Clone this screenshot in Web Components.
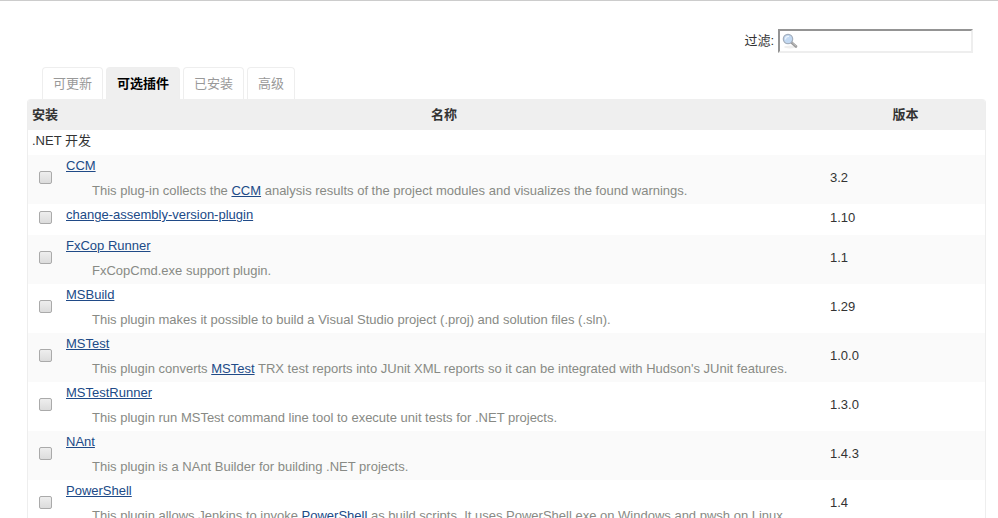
<!DOCTYPE html>
<html lang="zh-CN">
<head>
<meta charset="utf-8">
<title>插件管理</title>
<style>
  body {
    margin: 0;
    background: #fff;
    color: #333;
    font: 13px/16px "Liberation Sans", "Noto Sans CJK SC", sans-serif;
  }
</style>
</head>
<body>

<plugin-manager>
  <filter-box slot="filter" label="过滤:"></filter-box>
  <tab-link slot="tabs" href="#updates">可更新</tab-link>
  <tab-link slot="tabs" href="#available" active>可选插件</tab-link>
  <tab-link slot="tabs" href="#installed">已安装</tab-link>
  <tab-link slot="tabs" href="#advanced">高级</tab-link>
  <plugin-table></plugin-table>
</plugin-manager>

<script>
(function () {
  const CATEGORY = '.NET 开发';

  // [word] in a description becomes a link
  const PLUGINS = [
    { name: 'CCM', version: '3.2', text: 'This plug-in collects the [CCM] analysis results of the project modules and visualizes the found warnings.' },
    { name: 'change-assembly-version-plugin', version: '1.10', text: '' },
    { name: 'FxCop Runner', version: '1.1', text: 'FxCopCmd.exe support plugin.' },
    { name: 'MSBuild', version: '1.29', text: 'This plugin makes it possible to build a Visual Studio project (.proj) and solution files (.sln).' },
    { name: 'MSTest', version: '1.0.0', text: "This plugin converts [MSTest] TRX test reports into JUnit XML reports so it can be integrated with Hudson's JUnit features." },
    { name: 'MSTestRunner', version: '1.3.0', text: 'This plugin run MSTest command line tool to execute unit tests for .NET projects.' },
    { name: 'NAnt', version: '1.4.3', text: 'This plugin is a NAnt Builder for building .NET projects.' },
    { name: 'PowerShell', version: '1.4', text: 'This plugin allows Jenkins to invoke [PowerShell] as build scripts. It uses PowerShell.exe on Windows and pwsh on Linux' },
  ];

  class PluginManager extends HTMLElement {
    constructor() {
      super();
      this.attachShadow({ mode: 'open' }).innerHTML = `
        <style>
          :host { display: block; border-top: 1px solid #ccc; padding: 28px 12px 0 27px; }
          header { display: flex; justify-content: flex-end; padding-right: 13px; }
          nav { display: flex; gap: 3px; margin-top: 14px; padding-left: 15px; }
        </style>
        <header><slot name="filter"></slot></header>
        <nav><slot name="tabs"></slot></nav>
        <main><slot></slot></main>
      `;
    }
  }

  class FilterBox extends HTMLElement {
    constructor() {
      super();
      this.attachShadow({ mode: 'open' });
    }

    connectedCallback() {
      this.shadowRoot.innerHTML = `
        <style>
          :host { display: flex; align-items: center; gap: 4px; }
          .field { display: grid; align-items: center; }
          input, svg { grid-area: 1 / 1; }
          input {
            box-sizing: border-box;
            width: 195px;
            height: 24px;
            padding: 1px 2px 1px 20px;
            border: 2px solid;
            border-color: #949494 #eee #eee #949494;
            background: #fff;
            color: inherit;
            font: inherit;
          }
          svg { z-index: 1; margin-left: 4px; pointer-events: none; }
        </style>
        <label for="filter">${this.getAttribute('label')}</label>
        <div class="field">
          <input id="filter" type="text">
          <svg width="16" height="16" viewBox="0 0 16 16" fill="none" aria-hidden="true">
            <ellipse cx="8" cy="14" rx="6" ry="1.5" fill="#eee"/>
            <path d="M9.5 9.5 L14 13.5" stroke="#999" stroke-width="2.6" stroke-linecap="round"/>
            <path d="M10.5 10 L14 13" stroke="#ccc" stroke-width="0.8" stroke-linecap="round"/>
            <circle cx="6" cy="6" r="4.7" fill="#c3d9f2" stroke="#a5b0be" stroke-width="1.2"/>
            <path d="M3.5 6 Q3.8 3.5 6.5 3.4" stroke="#edf5fd" stroke-width="1.2" stroke-linecap="round"/>
          </svg>
        </div>
      `;
    }
  }

  class TabLink extends HTMLElement {
    constructor() {
      super();
      this.attachShadow({ mode: 'open' });
    }

    connectedCallback() {
      this.shadowRoot.innerHTML = `
        <style>
          :host { display: block; }
          a {
            display: block;
            padding: 8px 10px 7px;
            border: 1px solid #eee;
            border-bottom: 0;
            border-radius: 4px 4px 0 0;
            color: #999;
            text-decoration: none;
          }
          :host([active]) a { background: #efefef; color: #000; font-weight: bold; }
        </style>
        <a href="${this.getAttribute('href')}"><slot></slot></a>
      `;
    }
  }

  class PluginTable extends HTMLElement {
    constructor() {
      super();
      this.attachShadow({ mode: 'open' });
    }

    connectedCallback() {
      this.shadowRoot.innerHTML = `
        <style>
          :host { display: block; border: 1px solid #eee; border-top: 0; border-radius: 4px; overflow: hidden; }
          table { width: 100%; border-spacing: 0; table-layout: fixed; }
          .install { width: 34px; }
          .version { width: 159px; }
          th { box-sizing: border-box; padding: 8px 4px 7px; background: #efefef; white-space: nowrap; }
          td { padding: 2px 4px 6px; vertical-align: middle; }
          .category td { padding-top: 3px; }
          .plugin:nth-child(even) td { background: #fafafa; }
          .plugin .details { padding: 3px 4px 5px; }
          .name { padding-bottom: 7px; }
          .excerpt { padding: 2px 0 0 26px; color: #888a85; }
          a { color: #204a87; }
          input {
            appearance: none;
            display: block;
            box-sizing: border-box;
            width: 13px;
            height: 13px;
            margin: 0 auto;
            border: 1px solid #aaa;
            border-radius: 2px;
            background: linear-gradient(#eee, #dcdcdc);
          }
          input:checked { background: #204a87; }
        </style>
        <table>
          <colgroup><col class="install"><col><col class="version"></colgroup>
          <thead>
            <tr><th>安装</th><th>名称</th><th>版本</th></tr>
          </thead>
          <tbody>
            <tr class="category"><td colspan="3">${CATEGORY}</td></tr>
            ${PLUGINS.map((plugin, i) => this.row(plugin, i)).join('')}
          </tbody>
        </table>
      `;
    }

    row({ name, version, text }, i) {
      const excerpt = text.replace(/\[(.+?)\]/g, '<a href="#$1">$1</a>');
      return `
        <tr class="plugin">
          <td><input type="checkbox" id="plugin-${i}" aria-labelledby="name-${i}"></td>
          <td class="details">
            <div class="name"><a id="name-${i}" href="#${name}">${name}</a></div>
            ${excerpt ? `<div class="excerpt">${excerpt}</div>` : ''}
          </td>
          <td>${version}</td>
        </tr>
      `;
    }
  }

  customElements.define('plugin-manager', PluginManager);
  customElements.define('filter-box', FilterBox);
  customElements.define('tab-link', TabLink);
  customElements.define('plugin-table', PluginTable);
})();
</script>
</body>
</html>
